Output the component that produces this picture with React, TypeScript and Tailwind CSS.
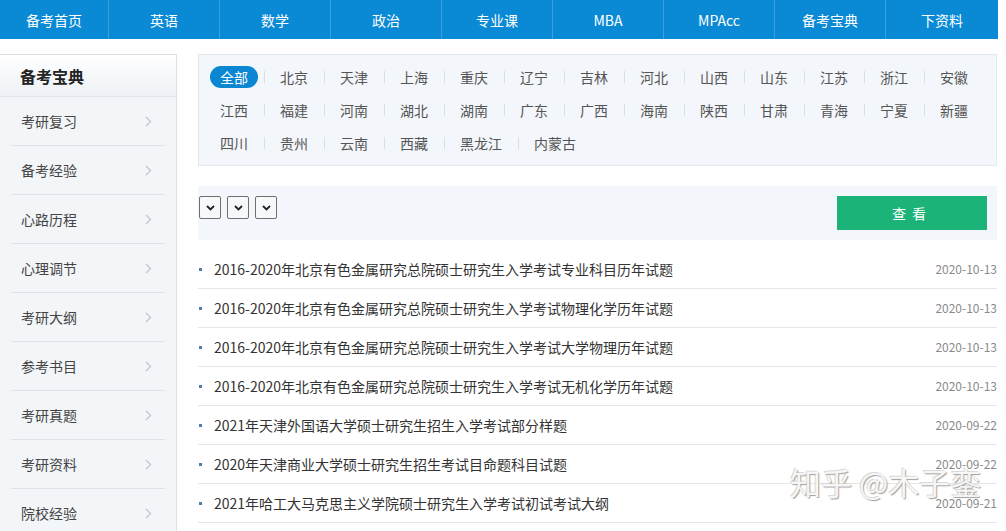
import React from "react";

const nav = ["备考首页", "英语", "数学", "政治", "专业课", "MBA", "MPAcc", "备考宝典", "下资料"];
const side = ["考研复习", "备考经验", "心路历程", "心理调节", "考研大纲", "参考书目", "考研真题", "考研资料", "院校经验"];
const rows = [
  ["全部", "北京", "天津", "上海", "重庆", "辽宁", "吉林", "河北", "山西", "山东", "江苏", "浙江", "安徽"],
  ["江西", "福建", "河南", "湖北", "湖南", "广东", "广西", "海南", "陕西", "甘肃", "青海", "宁夏", "新疆"],
  ["四川", "贵州", "云南", "西藏", "黑龙江", "内蒙古"],
];
const list: [string, string][] = [
  ["2016-2020年北京有色金属研究总院硕士研究生入学考试专业科目历年试题", "2020-10-13"],
  ["2016-2020年北京有色金属研究总院硕士研究生入学考试物理化学历年试题", "2020-10-13"],
  ["2016-2020年北京有色金属研究总院硕士研究生入学考试大学物理历年试题", "2020-10-13"],
  ["2016-2020年北京有色金属研究总院硕士研究生入学考试无机化学历年试题", "2020-10-13"],
  ["2021年天津外国语大学硕士研究生招生入学考试部分样题", "2020-09-22"],
  ["2020年天津商业大学硕士研究生招生考试目命题科目试题", "2020-09-22"],
  ["2021年哈工大马克思主义学院硕士研究生入学考试初试考试大纲", "2020-09-21"],
];

function Chevron() {
  return (
    <svg width="7" height="11" viewBox="0 0 7 11" className="shrink-0">
      <polyline points="1,1 5.5,5.5 1,10" fill="none" stroke="#c4c8cd" strokeWidth="1.4" />
    </svg>
  );
}

function SelectBox() {
  return (
    <div className="w-[22px] h-[23px] border border-[#6f6f6f] rounded-[2px] bg-[#f7f8fa] flex items-center justify-center">
      <svg width="9" height="6" viewBox="0 0 9 6">
        <polyline points="1,1 4.5,4.5 8,1" fill="none" stroke="#222" strokeWidth="1.8" />
      </svg>
    </div>
  );
}

export default function App() {
  return (
    <div className="relative w-[1006px] h-[531px] overflow-hidden bg-white font-['Microsoft_YaHei','Noto_Sans_CJK_SC',sans-serif]">
      {/* top nav */}
      <div className="w-[998px] h-[39px] bg-[#0a8ad5] grid grid-cols-[108px_repeat(7,111px)_1fr]">
        {nav.map((n, i) => (
          <div
            key={n}
            className={`flex items-center justify-center text-white text-[14px] leading-none ${i > 0 ? "border-l border-[#3a9fdd]" : ""}`}
          >
            {n}
          </div>
        ))}
      </div>

      <div className="flex mt-[15px]">
        {/* sidebar */}
        <div className="w-[177px] shrink-0 bg-[#f3f6f9] border-r border-t border-[#dde1e6] h-[500px]">
          <div className="h-[42px] border-b border-[#e1e5ea] bg-gradient-to-b from-white to-[#edf1f5] flex items-center pl-[20px]">
            <span className="text-[16px] font-bold text-[#222] leading-none">备考宝典</span>
          </div>
          {side.map((s) => (
            <div key={s} className="mx-[11px] h-[49px] border-b border-[#dfe3e8] flex items-center justify-between pl-[10px] pr-[13px]">
              <span className="text-[14px] text-[#444] leading-none">{s}</span>
              <Chevron />
            </div>
          ))}
        </div>

        {/* main */}
        <div className="ml-[21px] w-[799px]">
          <div className="bg-[#f3f6fa] border border-[#e3e8ee] pt-[11px] pb-[11px] pl-[11px] flex flex-col gap-y-[11px]">
            {rows.map((r, ri) => (
              <div key={ri} className="flex items-center h-[22px]">
                {r.map((c, ci) => (
                  <React.Fragment key={c}>
                    {ci > 0 && <div className="w-px h-[12px] bg-[#dadfe5] mx-[5.5px]" />}
                    <span
                      className={`px-[10px] h-[22px] flex items-center text-[14px] leading-none ${
                        c === "全部" ? "bg-[#0a86d3] text-white rounded-full" : "text-[#555]"
                      }`}
                    >
                      {c}
                    </span>
                  </React.Fragment>
                ))}
              </div>
            ))}
          </div>

          <div className="mt-[20px] h-[54px] bg-[#f3f6fa] flex items-start justify-between pt-[10px] pl-[1px] pr-[10px]">
            <div className="flex gap-[6px]">
              <SelectBox />
              <SelectBox />
              <SelectBox />
            </div>
            <div className="w-[150px] h-[34px] bg-[#1bb378] text-white text-[14px] flex items-center justify-center tracking-[6px] leading-none">
              查看
            </div>
          </div>

          <div className="mt-[10px]">
            {list.map(([t, d], i) => (
              <div key={i} className="h-[39px] border-b border-[#e6e6e6] flex items-center justify-between">
                <div className="flex items-center">
                  <span className="w-[3px] h-[3px] bg-[#4d7fae] ml-[1px] mr-[12px]" />
                  <span className="text-[14px] text-[#333] leading-none">{t}</span>
                </div>
                <span className="text-[12px] text-[#8a8a8a] leading-none">{d}</span>
              </div>
            ))}
          </div>
        </div>
      </div>

      {/* watermark */}
      <div className="absolute left-[790px] top-[466px] text-[31px] leading-none text-[#f6f6f6] [text-shadow:1px_1px_1px_#a0a0a0,-1px_-1px_0_#dadada] pointer-events-none whitespace-nowrap">
        知乎 @木子銮
      </div>
    </div>
  );
}
